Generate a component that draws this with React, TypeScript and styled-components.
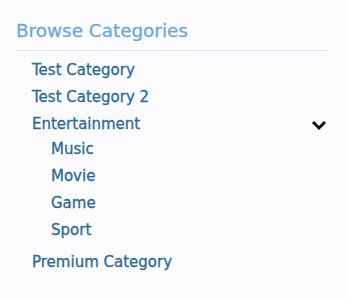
import React from 'react';
import styled, { createGlobalStyle } from 'styled-components';

const GlobalStyle = createGlobalStyle`
  html, body {
    margin: 0;
    padding: 0;
    background: #fbfbfd;
  }
`;

const Panel = styled.div`
  padding: 20px 18px 0 16px;
  font-family: 'DejaVu Sans', Tahoma, sans-serif;
  -webkit-text-stroke: 0.3px currentColor;
`;

const Heading = styled.h2`
  margin: 0;
  padding-bottom: 8px;
  font-size: 18.4px;
  line-height: 22px;
  font-weight: normal;
  color: #6ba9d6;
  border-bottom: 1px solid #d9e9f1;
`;

const List = styled.ul`
  list-style: none;
  margin: 0;
  padding: 5px 0 0 16px;
`;

const SubList = styled.ul`
  list-style: none;
  margin: -2px 0 0;
  padding: 0 0 5px 19px;
`;

const Row = styled.div`
  display: flex;
  align-items: center;
  justify-content: space-between;
  height: 27px;
  font-size: 15px;
  color: #2b6a95;
`;

const Chevron = styled.svg`
  margin: 2px 2px 0 0;
`;

const ChevronDown = () => (
  <Chevron width="16" height="12" viewBox="0 0 16 12">
    <path d="M2 3 L8 9 L14 3" fill="none" stroke="#111" strokeWidth="3" />
  </Chevron>
);

const subs = ['Music', 'Movie', 'Game', 'Sport'];

export default function App() {
  return (
    <>
      <GlobalStyle />
      <Panel>
        <Heading>Browse Categories</Heading>
        <List>
          <li>
            <Row>Test Category</Row>
          </li>
          <li>
            <Row>Test Category 2</Row>
          </li>
          <li>
            <Row>
              Entertainment
              <ChevronDown />
            </Row>
            <SubList>
              {subs.map((s) => (
                <li key={s}>
                  <Row>{s}</Row>
                </li>
              ))}
            </SubList>
          </li>
          <li>
            <Row>Premium Category</Row>
          </li>
        </List>
      </Panel>
    </>
  );
}
